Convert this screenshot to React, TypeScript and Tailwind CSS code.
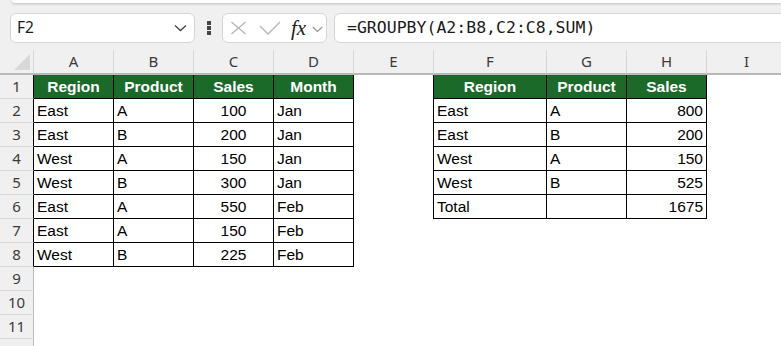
import React from "react";

const colW = [
  "w-[34px]",
  "w-[80px]",
  "w-[80px]",
  "w-[80px]",
  "w-[80px]",
  "w-[80px]",
  "w-[113px]",
  "w-[80px]",
  "w-[80px]",
  "w-[80px]",
];
const letters = ["A", "B", "C", "D", "E", "F", "G", "H", "I"];

type Cell = { t?: string; a?: "l" | "c" | "r"; kind: "none" | "head" | "data" | "edge" };

const t1 = [
  ["East", "A", "100", "Jan"],
  ["East", "B", "200", "Jan"],
  ["West", "A", "150", "Jan"],
  ["West", "B", "300", "Jan"],
  ["East", "A", "550", "Feb"],
  ["East", "A", "150", "Feb"],
  ["West", "B", "225", "Feb"],
];
const t2 = [
  ["East", "A", "800"],
  ["East", "B", "200"],
  ["West", "A", "150"],
  ["West", "B", "525"],
  ["Total", "", "1675"],
];

function buildRow(r: number): Cell[] {
  const cells: Cell[] = [];
  for (let c = 0; c < 4; c++) {
    if (r === 1) cells.push({ t: ["Region", "Product", "Sales", "Month"][c], a: "c", kind: "head" });
    else if (r <= 8) cells.push({ t: t1[r - 2][c], a: c === 2 ? "c" : "l", kind: "data" });
    else cells.push({ kind: "none" });
  }
  cells.push({ kind: r <= 6 ? "edge" : "none" });
  for (let c = 0; c < 3; c++) {
    if (r === 1) cells.push({ t: ["Region", "Product", "Sales"][c], a: "c", kind: "head" });
    else if (r <= 6) cells.push({ t: t2[r - 2][c], a: c === 2 ? "r" : "l", kind: "data" });
    else cells.push({ kind: "none" });
  }
  cells.push({ kind: "none" });
  return cells;
}

function GridCell({ cell, w }: { cell: Cell; w: string }) {
  let cls = `${w} shrink-0 h-full flex items-center px-[3px] text-[15.5px] leading-[24px] whitespace-nowrap overflow-hidden`;
  if (cell.kind === "head") cls += " bg-[#1b6a29] text-white font-bold border-r border-b border-black";
  else if (cell.kind === "data") cls += " bg-white text-black border-r border-b border-black";
  else if (cell.kind === "edge") cls += " bg-white border-r border-black";
  else cls += " bg-white";
  if (cell.a === "c") cls += " justify-center";
  else if (cell.a === "r") cls += " justify-end";
  else cls += " justify-start";
  return <div className={cls}>{cell.t}</div>;
}

export default function App() {
  const rows = Array.from({ length: 12 }, (_, i) => i + 1);
  return (
    <div
      className="w-[781px] h-[346px] overflow-hidden bg-white relative"
      style={{ fontFamily: '"Liberation Sans", Arial, sans-serif' }}
    >
      {/* toolbar */}
      <div className="h-[50px] bg-[#f0f0f0] flex flex-col">
        <div className="h-[3px] ml-[12px] bg-white rounded-bl-[6px] shadow-[0_1px_3px_rgba(0,0,0,0.22)]" />
        <div className="flex mt-[10px] h-[30px]">
          <div className="ml-[10px] w-[185px] h-full bg-white border border-[#d4d4d4] rounded-[6px] flex items-center pl-[6px] pr-[6px] justify-between">
            <span
              className="text-[15.5px] text-[#1a1a1a]"
              style={{ fontFamily: '"Noto Sans", sans-serif' }}
            >
              F2
            </span>
            <svg width="13" height="8" viewBox="0 0 13 8" className="mr-[1px]">
              <polyline points="1,1.5 6.5,6.5 12,1.5" fill="none" stroke="#444" strokeWidth="1.3" />
            </svg>
          </div>
          <div className="w-[27px] h-full flex flex-col items-center justify-center gap-[1.5px] pl-[1px]">
            <div className="w-[3.5px] h-[3.5px] bg-[#444]" />
            <div className="w-[3.5px] h-[3.5px] bg-[#444]" />
            <div className="w-[3.5px] h-[3.5px] bg-[#444]" />
          </div>
          <div className="w-[105px] h-full bg-white border border-[#d4d4d4] rounded-[6px] flex items-center pl-[7px]">
            <svg width="17" height="14" viewBox="0 0 17 14">
              <line x1="1.5" y1="1" x2="15.5" y2="13" stroke="#b5b5b5" strokeWidth="1.3" />
              <line x1="15.5" y1="1" x2="1.5" y2="13" stroke="#b5b5b5" strokeWidth="1.3" />
            </svg>
            <svg width="22" height="14" viewBox="0 0 22 14" className="ml-[12px]">
              <polyline points="1,5 9,13 21,1" fill="none" stroke="#b5b5b5" strokeWidth="1.3" />
            </svg>
            <span
              className="ml-[10px] italic text-[21px] leading-none text-[#222]"
              style={{ fontFamily: '"Liberation Serif", "Times New Roman", serif' }}
            >
              fx
            </span>
            <svg width="11" height="7" viewBox="0 0 11 7" className="ml-[6px] mt-[2px]">
              <polyline points="0.8,1 5.5,5.5 10.2,1" fill="none" stroke="#9a9a9a" strokeWidth="1.2" />
            </svg>
          </div>
          <div className="ml-[7px] flex-1 -mr-[10px] h-full bg-white border border-[#d4d4d4] rounded-[6px] flex items-center pl-[12px]">
            <span
              className="text-[16.5px] text-[#1a1a1a] whitespace-nowrap"
              style={{ fontFamily: '"DejaVu Sans Mono", "Liberation Mono", monospace' }}
            >
              =GROUPBY(A2:B8,C2:C8,SUM)
            </span>
          </div>
        </div>
      </div>

      {/* column headers */}
      <div className="flex h-[25px]" style={{ fontFamily: '"Noto Sans", sans-serif' }}>
        <div className="w-[34px] shrink-0 h-full bg-[#f0f0f0] border-r border-b-2 border-r-[#d6d6d6] border-b-[#b8b8b8] flex items-end justify-end pr-[3px] pb-[3px]">
          <svg width="16" height="16" viewBox="0 0 16 16">
            <polygon points="16,0 16,16 0,16" fill="#d8d8d8" />
          </svg>
        </div>
        {letters.map((l, i) => (
          <div
            key={l}
            className={`${colW[i + 1]} shrink-0 h-full bg-[#f0f0f0] border-r border-b-2 border-r-[#d6d6d6] border-b-[#b8b8b8] flex items-center justify-center text-[15px] text-[#3a3a3a]`}
          >
            {l}
          </div>
        ))}
      </div>

      {/* rows */}
      {rows.map((r) => {
        const cells = buildRow(r);
        return (
          <div key={r} className="flex h-[24px]">
            <div
              className={`w-[34px] shrink-0 h-full bg-[#f0f0f0] border-b border-b-[#d6d6d6] border-r flex items-center justify-center text-[15px] text-[#3a3a3a] ${
                r <= 8 ? "border-r-black" : "border-r-[#bcbcbc]"
              }`}
              style={{ fontFamily: '"Noto Sans", sans-serif' }}
            >
              {r}
            </div>
            {cells.map((c, i) => (
              <GridCell key={i} cell={c} w={colW[i + 1]} />
            ))}
          </div>
        );
      })}
    </div>
  );
}
